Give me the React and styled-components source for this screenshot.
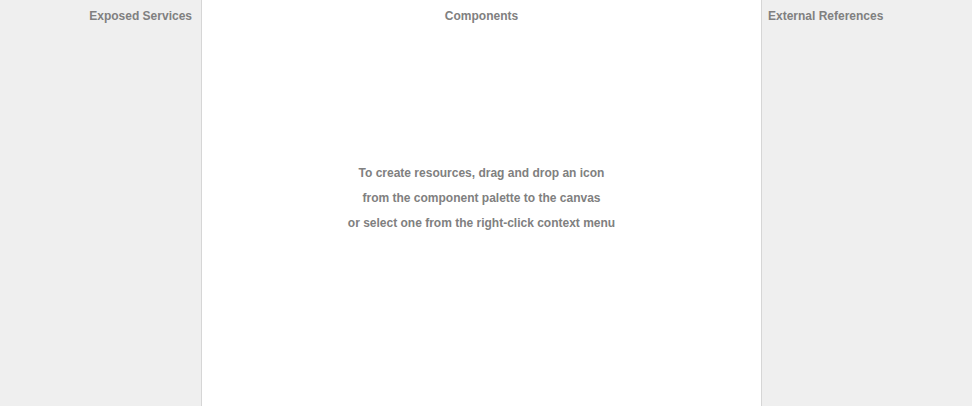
import styled, { createGlobalStyle } from "styled-components";

const GlobalStyle = createGlobalStyle`
  html, body {
    margin: 0;
    padding: 0;
    background: #fff;
  }
  body {
    font-family: "Liberation Sans", Arial, sans-serif;
  }
`;

const Layout = styled.div`
  display: grid;
  grid-template-columns: 201px 1px 559px 1px 210px;
  height: 406px;
  width: 972px;
`;

const SidePanel = styled.div`
  background: #efefef;
  display: flex;
  flex-direction: column;
  align-items: ${(p) => (p.$align === "right" ? "flex-end" : "flex-start")};
`;

const Divider = styled.div`
  background: #d6d6d6;
`;

const Canvas = styled.div`
  background: #fff;
  display: flex;
  flex-direction: column;
  align-items: center;
`;

const Title = styled.div`
  font-size: 12px;
  font-weight: bold;
  color: #808080;
  line-height: 16px;
  padding: 8px ${(p) => (p.$align === "right" ? "9px" : "0")} 0
    ${(p) => (p.$align === "left" ? "6px" : "0")};
`;

const Hint = styled.div`
  margin-top: 137px;
  display: flex;
  flex-direction: column;
  align-items: center;
  font-size: 12px;
  font-weight: bold;
  color: #808080;
  line-height: 25px;
`;

export default function App() {
  return (
    <>
      <GlobalStyle />
      <Layout>
        <SidePanel $align="right">
          <Title $align="right">Exposed Services</Title>
        </SidePanel>
        <Divider />
        <Canvas>
          <Title>Components</Title>
          <Hint>
            <span>To create resources, drag and drop an icon</span>
            <span>from the component palette to the canvas</span>
            <span>or select one from the right-click context menu</span>
          </Hint>
        </Canvas>
        <Divider />
        <SidePanel $align="left">
          <Title $align="left">External References</Title>
        </SidePanel>
      </Layout>
    </>
  );
}
